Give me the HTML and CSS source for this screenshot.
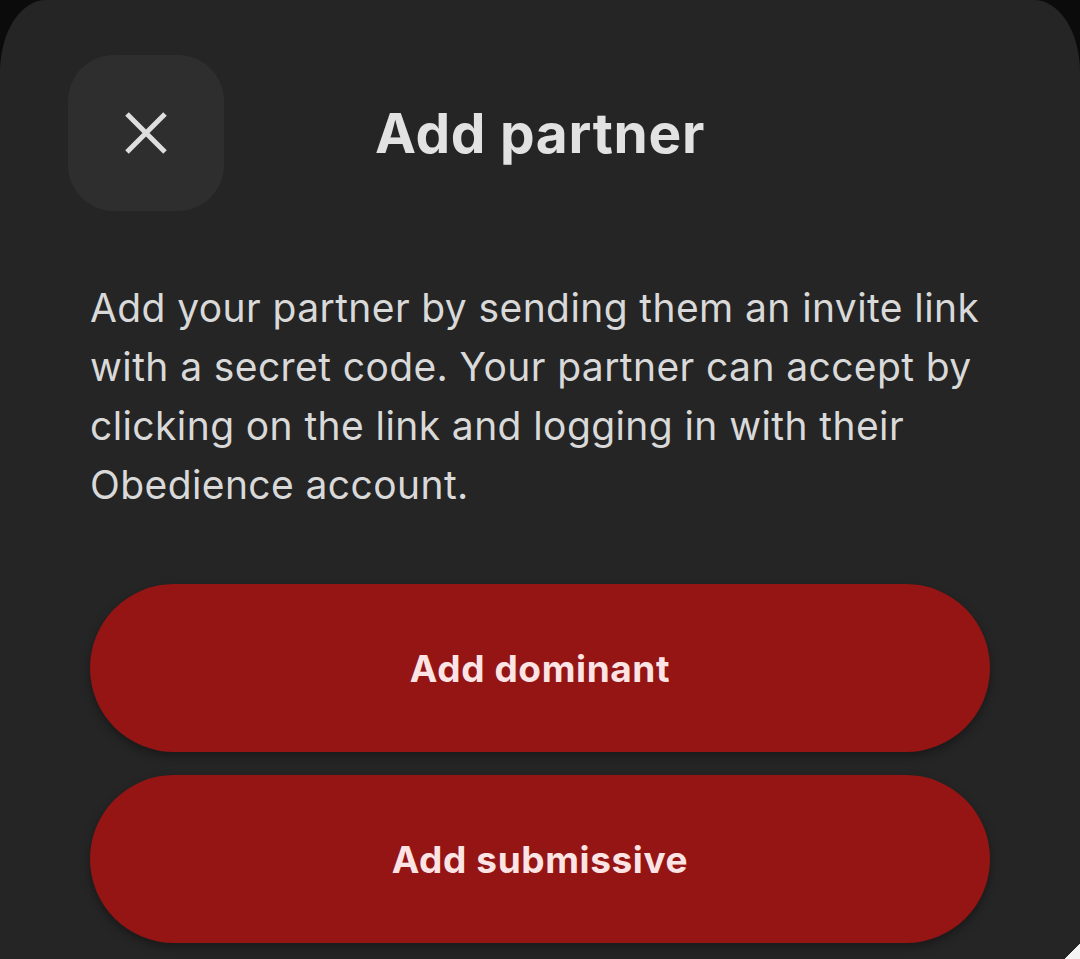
FILE: index.html
```html
<!DOCTYPE html>
<html>
<head>
<meta charset="utf-8">
<link rel="stylesheet" href="styles.css">
</head>
<body>
<div class="sheet">
  <div class="header">
    <button class="close" aria-label="Close">
      <svg width="44" height="44" viewBox="0 0 44 44"><path d="M3 3 L41 41 M41 3 L3 41" stroke="#dedede" stroke-width="5" stroke-linecap="butt" fill="none"/></svg>
    </button>
    <h1 class="title">Add partner</h1>
    <div class="spacer"></div>
  </div>
  <p class="desc">Add your partner by sending them an invite link with a secret code. Your partner can accept by clicking on the link and logging in with their Obedience account.</p>
  <div class="actions">
    <button class="btn">Add dominant</button>
    <button class="btn">Add submissive</button>
  </div>
</div>
</body>
</html>
```

FILE: styles.css
```css
html, body {
  margin: 0;
  padding: 0;
  background: #0b0b0b;
  height: 100%;
  overflow: hidden;
}
.sheet {
  position: relative;
  background: #252525;
  border-radius: 46px 46px 0 0 / 72px 72px 0 0;
  min-height: 959px;
  box-sizing: border-box;
  padding: 55px 90px 0;
  font-family: Inter, "Liberation Sans", sans-serif;
}
.sheet::after {
  content: "";
  position: absolute;
  right: 0;
  top: 944px;
  width: 15px;
  height: 15px;
  background: linear-gradient(135deg, transparent 50%, #f4f4f4 50%);
}
.header {
  display: grid;
  grid-template-columns: 156px 1fr 156px;
  align-items: center;
  margin: 0 -22px;
}
.close {
  width: 156px;
  height: 156px;
  border: none;
  border-radius: 46px;
  background: #2e2e2e;
  display: flex;
  align-items: center;
  justify-content: center;
  padding: 0;
}
.title {
  margin: 0;
  text-align: center;
  font-size: 55px;
  font-weight: 700;
  color: #e2e2e2;
  letter-spacing: 0.7px;
}
.desc {
  margin: 67px 0 0;
  font-size: 39px;
  line-height: 59px;
  color: #d9d9d9;
  font-weight: 400;
  letter-spacing: 0.4px;
}
.actions {
  display: flex;
  flex-direction: column;
  gap: 23px;
  margin-top: 70px;
}
.btn {
  height: 168px;
  border: none;
  border-radius: 84px;
  background: #951515;
  color: #fde4e4;
  font-family: Inter, "Liberation Sans", sans-serif;
  font-size: 37px;
  font-weight: 700;
  letter-spacing: 0.6px;
  box-shadow: 0 4px 10px rgba(0,0,0,0.35);
}
```
